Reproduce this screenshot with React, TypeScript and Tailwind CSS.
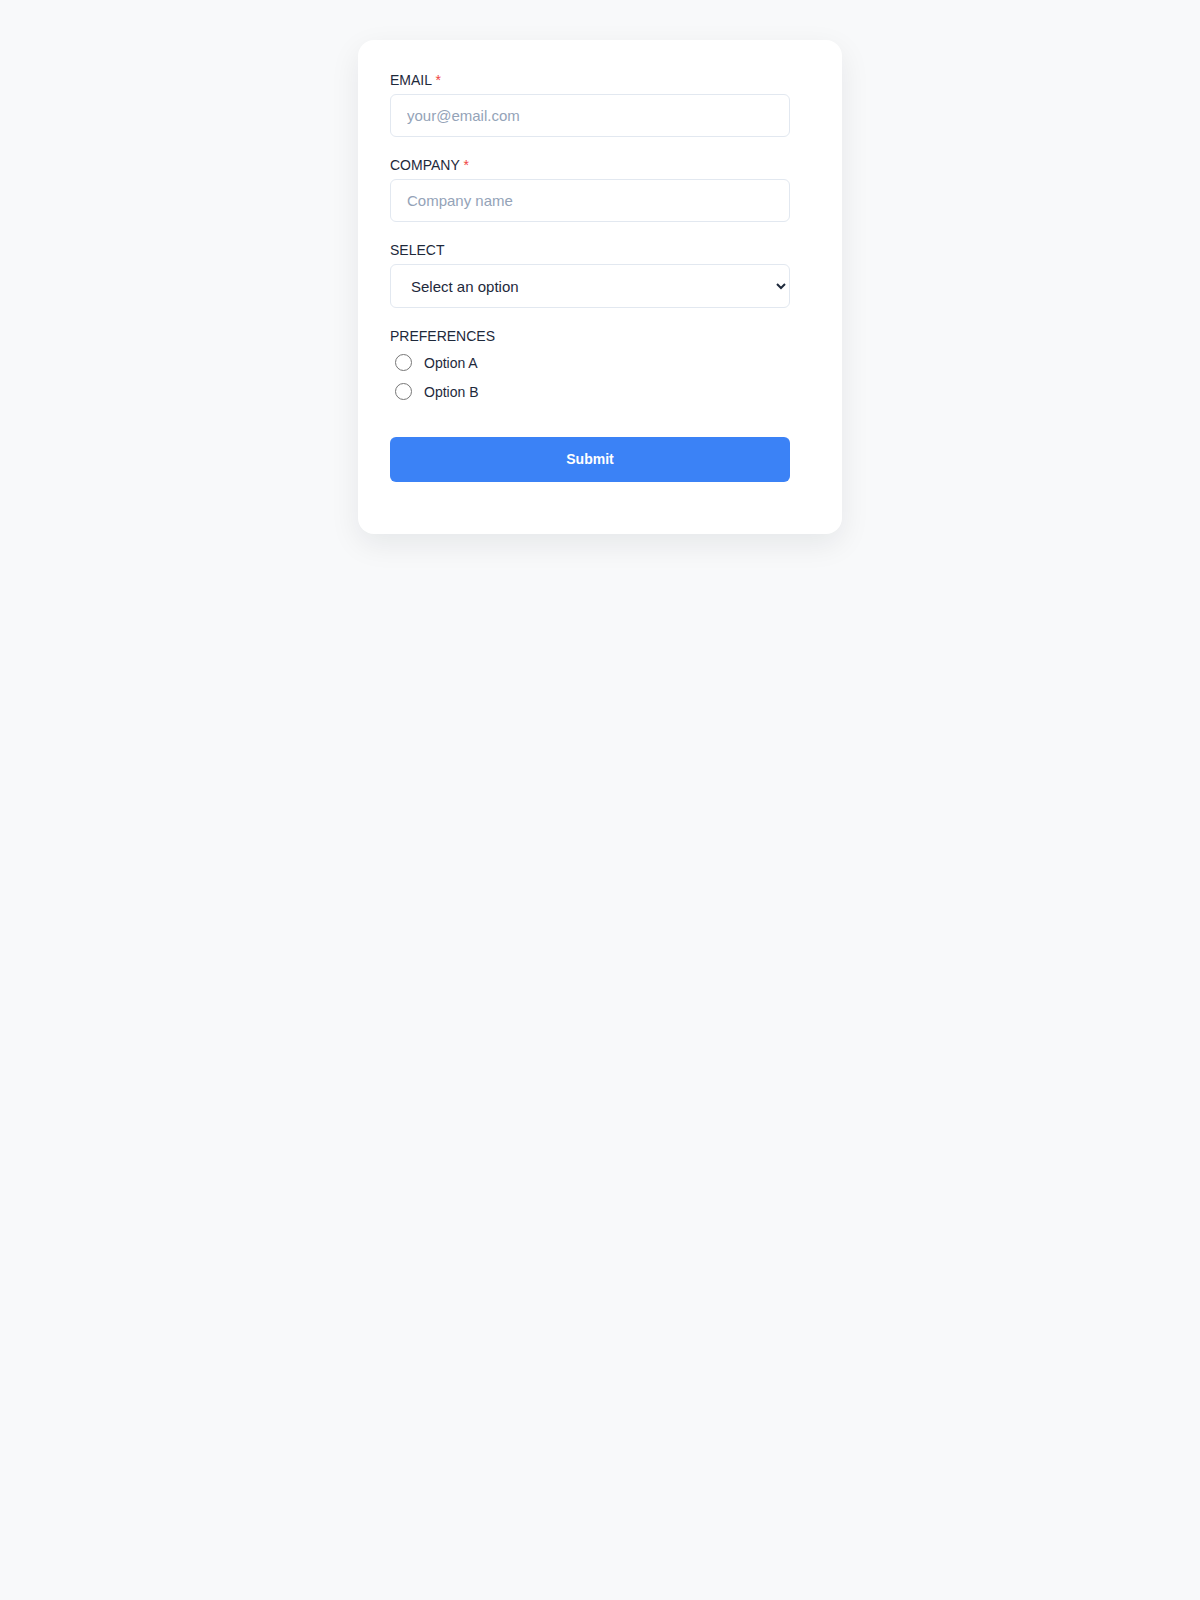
import { useState } from "react";

const fieldLabel = "mb-1.5 block text-sm leading-4 text-[#1e293b]";
const inputClass =
  "h-[43px] w-full rounded-md border border-[#e2e8f0] bg-white px-4 text-[15px] text-[#1e293b] outline-none placeholder:text-[#94a3b8]";

export default function App() {
  const [pref, setPref] = useState("");

  return (
    <div
      className="min-h-[1600px] w-full bg-[#f8f9fa] pt-10"
      style={{ fontFamily: '"Liberation Sans", Arial, sans-serif' }}
    >
      <div className="mx-auto w-[484px] rounded-2xl bg-white pb-[32px] pl-8 pr-[52px] pt-8 shadow-[0_10px_30px_rgba(15,23,42,0.08)]">
        <form className="w-[400px]" onSubmit={(e) => e.preventDefault()}>
          {/* Email */}
          <div className="mb-5">
            <label className={fieldLabel}>
              EMAIL <span className="text-[#ef4444]">*</span>
            </label>
            <input
              type="email"
              placeholder="your@email.com"
              className={inputClass}
            />
          </div>

          {/* Company */}
          <div className="mb-5">
            <label className={fieldLabel}>
              COMPANY <span className="text-[#ef4444]">*</span>
            </label>
            <input placeholder="Company name" className={inputClass} />
          </div>

          {/* Select */}
          <div className="mb-5">
            <label className={fieldLabel}>SELECT</label>
            <select className="h-[44px] w-full rounded-md border border-[#e2e8f0] bg-white px-4 text-[15px] text-[#1e293b] outline-none">
              <option value="">Select an option</option>
              <option value="a">Option A</option>
              <option value="b">Option B</option>
            </select>
          </div>

          {/* Preferences */}
          <div className="mb-5">
            <label className="mb-1 block text-sm leading-4 text-[#1e293b]">
              PREFERENCES
            </label>
            {["Option A", "Option B"].map((opt) => (
              <label
                key={opt}
                className="flex h-[29px] items-center text-sm text-[#1e293b]"
              >
                <input
                  type="radio"
                  name="pref"
                  checked={pref === opt}
                  onChange={() => setPref(opt)}
                  className="m-0 ml-[5px] mr-[12px] size-[17px]"
                />
                {opt}
              </label>
            ))}
          </div>

          <button
            type="submit"
            className="mt-[11px] h-[45px] w-full rounded-md bg-[#3b82f6] pb-0.5 text-sm font-bold text-white"
          >
            Submit
          </button>
          <div className="h-5" />
        </form>
      </div>
    </div>
  );
}
